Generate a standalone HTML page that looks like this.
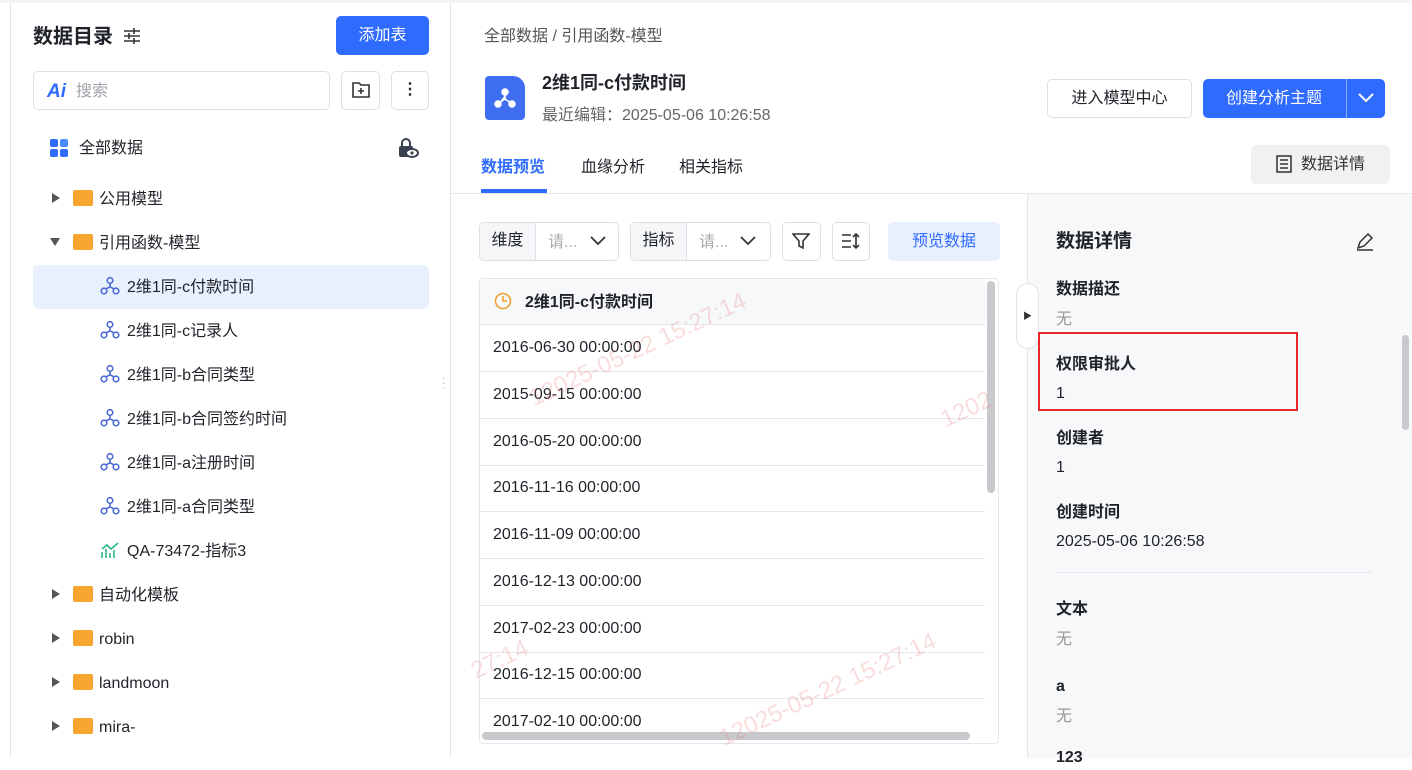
<!DOCTYPE html>
<html><head><meta charset="utf-8"><style>
*{box-sizing:border-box;margin:0;padding:0}
body{width:1412px;height:758px;overflow:hidden;background:#fff;font-family:"Liberation Sans","Noto Sans CJK SC",sans-serif;color:#1f2329;position:relative;font-size:16px;line-height:20px}
.a{position:absolute}
.row{position:absolute;left:480px;width:505px;height:47px;border-bottom:1px solid #e5e6eb;padding-left:13px;line-height:46px;font-size:16px;color:#1f2329}
.t{position:absolute;font-size:16px;line-height:24px;color:#1f2329;white-space:nowrap;margin-top:2px}
.folder{position:absolute;width:20px;height:16px;background:#f7a530;border-radius:2px}
.arr{position:absolute;width:0;height:0;border-top:5px solid transparent;border-bottom:5px solid transparent;border-left:8px solid #555}
.down{position:absolute;width:0;height:0;border-left:5px solid transparent;border-right:5px solid transparent;border-top:8px solid #555}
.wm{position:absolute;color:rgba(230,120,120,.25);font-size:24px;transform:rotate(-25deg);white-space:nowrap}
.lbl{position:absolute;left:1056px;font-size:16px;font-weight:bold;line-height:24px;margin-top:2px}
.val{position:absolute;left:1056px;font-size:16px;line-height:24px;margin-top:2px}
</style></head><body>
<svg width="0" height="0" style="position:absolute"><defs><symbol id="m" viewBox="0 0 20 20"><g fill="none" stroke="#4b6bd6" stroke-width="1.6"><circle cx="10" cy="4.5" r="2.8"/><circle cx="4" cy="15" r="2.8"/><circle cx="16" cy="15" r="2.8"/><path d="M10 7.3v3.5L5.8 13M10 10.8l4.2 2.2"/></g></symbol></defs></svg>
<div class="a" style="left:10px;top:0;width:1px;height:758px;background:#e5e6eb"></div>
<div class="a" style="left:450px;top:0;width:1px;height:758px;background:#e5e6eb"></div>
<div class="a" style="left:0;top:0;width:1412px;height:3px;background:#f3f4f6"></div>
<!-- left -->
<div class="t" style="left:33px;top:21px;font-size:20px;line-height:28px;font-weight:bold">数据目录</div>
<svg class="a" style="left:122px;top:26px" width="20" height="20" viewBox="0 0 20 20" fill="none" stroke="#333" stroke-width="1.6"><path d="M2 5h16M2 10h16M2 15h16M12 2v6M7 7v6M12 12v6"/></svg>
<div class="a" style="left:336px;top:16px;width:93px;height:39px;background:#2f6bff;border-radius:5px;color:#fff;text-align:center;line-height:39px;font-size:16px">添加表</div>
<div class="a" style="left:33px;top:71px;width:297px;height:39px;border:1px solid #dcdfe6;border-radius:5px"></div>
<div class="t" style="left:47px;top:78px;font-weight:bold;font-style:italic;color:#2f6bff;font-size:19px">Ai</div>
<div class="t" style="left:76px;top:78px;color:#a0a4ab">搜索</div>
<div class="a" style="left:341px;top:71px;width:39px;height:39px;border:1px solid #dcdfe6;border-radius:5px"></div>
<svg class="a" style="left:351px;top:81px" width="20" height="18" viewBox="0 0 20 18" fill="none" stroke="#333" stroke-width="1.6"><path d="M2 2h6l2 2h8v12H2z M10 7v6M7 10h6"/></svg>
<div class="a" style="left:391px;top:71px;width:38px;height:39px;border:1px solid #dcdfe6;border-radius:5px;text-align:center;line-height:36px;font-weight:bold">⋮</div>
<div class="a" style="left:50px;top:139px;width:18px;height:18px;display:grid;grid-template-columns:8px 8px;gap:2px"><i style="background:#2f6bff;border-radius:2px"></i><i style="background:#4a8cff;border-radius:2px"></i><i style="background:#2f6bff;border-radius:2px"></i><i style="background:#2f6bff;border-radius:2px"></i></div>
<div class="t" style="left:79px;top:135px">全部数据</div>
<svg class="a" style="left:397px;top:138px" width="22" height="20" viewBox="0 0 22 20"><path d="M5 8V5a4 4 0 0 1 8 0v3" fill="none" stroke="#3a4150" stroke-width="2"/><rect x="2" y="8" width="14" height="11" rx="2" fill="#3a4150"/><ellipse cx="15" cy="15" rx="6" ry="4" fill="#fff" stroke="#3a4150" stroke-width="2"/><circle cx="15" cy="15" r="1.6" fill="#3a4150"/></svg>

<div class="arr" style="left:52px;top:193px"></div><div class="folder" style="left:73px;top:190px"></div><div class="t" style="left:99px;top:186px">公用模型</div>
<div class="down" style="left:50px;top:238px"></div><div class="folder" style="left:73px;top:234px"></div><div class="t" style="left:99px;top:230px">引用函数-模型</div>
<div class="a" style="left:33px;top:265px;width:396px;height:44px;background:#e8f0fe;border-radius:5px"></div>
<svg class="a" style="left:100px;top:276px" width="20" height="20"><use href="#m"/></svg><div class="t" style="left:127px;top:274px">2维1同-c付款时间</div>
<svg class="a" style="left:100px;top:320px" width="20" height="20"><use href="#m"/></svg><div class="t" style="left:127px;top:318px">2维1同-c记录人</div>
<svg class="a" style="left:100px;top:364px" width="20" height="20"><use href="#m"/></svg><div class="t" style="left:127px;top:362px">2维1同-b合同类型</div>
<svg class="a" style="left:100px;top:408px" width="20" height="20"><use href="#m"/></svg><div class="t" style="left:127px;top:406px">2维1同-b合同签约时间</div>
<svg class="a" style="left:100px;top:452px" width="20" height="20"><use href="#m"/></svg><div class="t" style="left:127px;top:450px">2维1同-a注册时间</div>
<svg class="a" style="left:100px;top:496px" width="20" height="20"><use href="#m"/></svg><div class="t" style="left:127px;top:494px">2维1同-a合同类型</div>
<svg class="a" style="left:100px;top:541px" width="20" height="18" viewBox="0 0 20 18" fill="none" stroke="#2bb58a" stroke-width="1.6"><path d="M2 17V11M6 17V8M10 17V12M14 17V9M2 8l5-4 4 4 7-6"/></svg><div class="t" style="left:127px;top:538px">QA-73472-指标3</div>
<div class="arr" style="left:52px;top:589px"></div><div class="folder" style="left:73px;top:586px"></div><div class="t" style="left:99px;top:582px">自动化模板</div>
<div class="arr" style="left:52px;top:633px"></div><div class="folder" style="left:73px;top:630px"></div><div class="t" style="left:99px;top:626px">robin</div>
<div class="arr" style="left:52px;top:677px"></div><div class="folder" style="left:73px;top:674px"></div><div class="t" style="left:99px;top:670px">landmoon</div>
<div class="arr" style="left:52px;top:721px"></div><div class="folder" style="left:73px;top:718px"></div><div class="t" style="left:99px;top:714px">mira-</div>
<div class="a" style="left:442px;top:376px;color:#aaa;font-size:10px;line-height:5px">·<br>·<br>·</div>
<!-- header -->
<div class="t" style="left:484px;top:23px;color:#555">全部数据 / 引用函数-模型</div>
<div class="a" style="left:485px;top:76px;width:40px;height:44px;background:#3f6ff0;border-radius:4px 12px 4px 4px"></div>
<svg class="a" style="left:493px;top:86px" width="24" height="24" viewBox="0 0 24 24" fill="#fff" stroke="#fff" stroke-width="1.5"><circle cx="12" cy="6" r="3"/><circle cx="5" cy="18" r="3"/><circle cx="19" cy="18" r="3"/><path d="M12 9v4l-6 4M12 13l6 4"/></svg>
<div class="t" style="left:542px;top:69px;font-size:18px;line-height:24px;font-weight:bold">2维1同-c付款时间</div>
<div class="t" style="left:542px;top:102px;color:#666">最近编辑：2025-05-06 10:26:58</div>
<div class="a" style="left:1047px;top:79px;width:145px;height:39px;border:1px solid #dcdfe6;border-radius:5px;text-align:center;line-height:38px">进入模型中心</div>
<div class="a" style="left:1203px;top:79px;width:182px;height:39px;background:#2f6bff;border-radius:5px;color:#fff;line-height:39px;padding-left:23px">创建分析主题</div>
<div class="a" style="left:1346px;top:79px;width:1px;height:39px;background:#8fb0ff"></div>
<svg class="a" style="left:1357px;top:92px" width="18" height="12" viewBox="0 0 18 12" fill="none" stroke="#fff" stroke-width="2"><path d="M2 2l7 7 7-7"/></svg>
<div class="t" style="left:481px;top:154px;color:#2f6bff;font-weight:bold">数据预览</div>
<div class="a" style="left:481px;top:189px;width:66px;height:4px;background:#2f6bff"></div>
<div class="t" style="left:581px;top:154px">血缘分析</div>
<div class="t" style="left:679px;top:154px">相关指标</div>
<div class="a" style="left:1251px;top:145px;width:139px;height:39px;background:#f0f1f3;border-radius:5px;line-height:39px;padding-left:50px;color:#333">数据详情</div>
<svg class="a" style="left:1275px;top:155px" width="18" height="18" viewBox="0 0 18 18" fill="none" stroke="#333" stroke-width="1.5"><rect x="2" y="1" width="14" height="16"/><path d="M5 5h8M5 9h8M5 13h8"/></svg>
<div class="a" style="left:451px;top:193px;width:961px;height:1px;background:#e5e6eb"></div>
<!-- filters -->
<div class="a" style="left:479px;top:222px;width:140px;height:39px;border:1px solid #dcdfe6;border-radius:5px;overflow:hidden"><div style="width:56px;height:100%;background:#f5f6f8;border-right:1px solid #dcdfe6;text-align:center;line-height:36px">维度</div></div>
<div class="t" style="left:548px;top:229px;color:#aaa">请...</div>
<svg class="a" style="left:590px;top:236px" width="16" height="10" viewBox="0 0 16 10" fill="none" stroke="#333" stroke-width="1.8"><path d="M1 1l7 7 7-7"/></svg>
<div class="a" style="left:630px;top:222px;width:141px;height:39px;border:1px solid #dcdfe6;border-radius:5px;overflow:hidden"><div style="width:56px;height:100%;background:#f5f6f8;border-right:1px solid #dcdfe6;text-align:center;line-height:36px">指标</div></div>
<div class="t" style="left:699px;top:229px;color:#aaa">请...</div>
<svg class="a" style="left:740px;top:236px" width="16" height="10" viewBox="0 0 16 10" fill="none" stroke="#333" stroke-width="1.8"><path d="M1 1l7 7 7-7"/></svg>
<div class="a" style="left:782px;top:222px;width:39px;height:39px;border:1px solid #dcdfe6;border-radius:5px"></div>
<svg class="a" style="left:792px;top:232px" width="18" height="18" viewBox="0 0 18 18" fill="none" stroke="#333" stroke-width="1.6"><path d="M1 2h16l-6 7v7l-4-2V9z"/></svg>
<div class="a" style="left:832px;top:222px;width:38px;height:39px;border:1px solid #dcdfe6;border-radius:5px"></div>
<svg class="a" style="left:841px;top:232px" width="20" height="18" viewBox="0 0 20 18" fill="none" stroke="#333" stroke-width="1.6"><path d="M1 3h9M1 9h9M1 15h9M15 2v14M12 5l3-3 3 3M12 13l3 3 3-3"/></svg>
<div class="a" style="left:888px;top:222px;width:112px;height:39px;background:#e8f0fe;border-radius:5px;color:#2f6bff;text-align:center;line-height:39px">预览数据</div>
<!-- table -->
<div class="a" style="left:479px;top:278px;width:520px;height:466px;border:1px solid #e5e6eb;border-radius:4px"></div>
<div class="a" style="left:480px;top:279px;width:505px;height:46px;background:#f7f8fa;border-bottom:1px solid #e5e6eb"></div>
<svg class="a" style="left:494px;top:292px" width="18" height="18" viewBox="0 0 18 18" fill="none" stroke="#f0a030" stroke-width="1.6"><circle cx="9" cy="9" r="7.5"/><path d="M9 4v5h4"/></svg>
<div class="t" style="left:525px;top:289px;font-weight:bold">2维1同-c付款时间</div>
<div class="row" style="top:325px">2016-06-30 00:00:00</div>
<div class="row" style="top:372px">2015-09-15 00:00:00</div>
<div class="row" style="top:419px">2016-05-20 00:00:00</div>
<div class="row" style="top:465px">2016-11-16 00:00:00</div>
<div class="row" style="top:512px">2016-11-09 00:00:00</div>
<div class="row" style="top:559px">2016-12-13 00:00:00</div>
<div class="row" style="top:606px">2017-02-23 00:00:00</div>
<div class="row" style="top:652px">2016-12-15 00:00:00</div>
<div class="row" style="top:699px;border:none">2017-02-10 00:00:00</div>
<div class="a" style="left:987px;top:281px;width:8px;height:212px;background:#c8c9cc;border-radius:4px"></div>
<div class="a" style="left:482px;top:732px;width:488px;height:8px;background:#c8c9cc;border-radius:4px"></div>
<div class="wm" style="left:520px;top:340px">12025-05-22 15:27:14</div>
<div class="wm" style="left:940px;top:400px">1202</div>
<div class="wm" style="left:470px;top:650px">27:14</div>
<div class="wm" style="left:710px;top:680px">12025-05-22 15:27:14</div>
<!-- detail -->
<div class="a" style="left:1027px;top:194px;width:385px;height:564px;background:#f7f8fa;border-left:1px solid #e5e6eb"></div>
<div class="a" style="left:1016px;top:283px;width:23px;height:66px;background:#fff;border:1px solid #e5e6eb;border-radius:12px;font-size:9px;line-height:64px;text-align:center;color:#333">▶</div>
<div class="lbl" style="top:227px;font-size:19px;line-height:26px">数据详情</div>
<svg class="a" style="left:1355px;top:231px" width="20" height="20" viewBox="0 0 20 20" fill="none" stroke="#333" stroke-width="1.5"><path d="M3 17l2-6 8-8 4 4-8 8zM2 19h16"/></svg>
<div class="lbl" style="top:276px">数据描还</div>
<div class="val" style="top:306px;color:#999">无</div>
<div class="a" style="left:1038px;top:332px;width:260px;height:79px;border:2px solid #e8262b"></div>
<div class="lbl" style="top:351px">权限审批人</div>
<div class="val" style="top:380px">1</div>
<div class="lbl" style="top:425px">创建者</div>
<div class="val" style="top:454px">1</div>
<div class="lbl" style="top:499px">创建时间</div>
<div class="val" style="top:528px">2025-05-06 10:26:58</div>
<div class="a" style="left:1056px;top:572px;width:316px;height:1px;background:#e5e6eb"></div>
<div class="lbl" style="top:596px">文本</div>
<div class="val" style="top:626px;color:#999">无</div>
<div class="lbl" style="top:673px">a</div>
<div class="val" style="top:703px;color:#999">无</div>
<div class="lbl" style="top:744px">123</div>
<div class="a" style="left:1402px;top:335px;width:7px;height:95px;background:#c8c9cc;border-radius:4px"></div>
</body></html>
